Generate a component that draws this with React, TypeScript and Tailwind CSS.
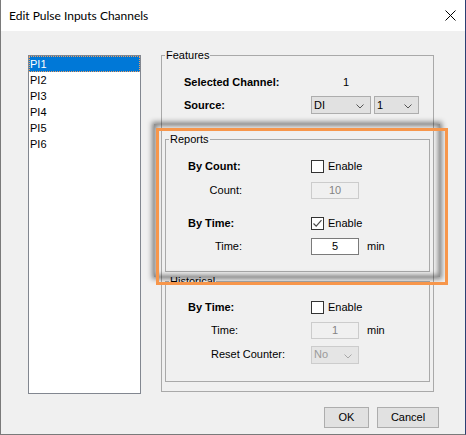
import React from "react";

function CheckBox({ checked }: { checked?: boolean }) {
  return (
    <span className="flex h-[13px] w-[13px] shrink-0 items-center justify-center border border-[#333333] bg-white">
      {checked && (
        <svg width="11" height="11" viewBox="0 0 11 11">
          <path d="M1.5 5.5 L4.2 8.2 L9.5 2.2" fill="none" stroke="#4a4a4a" strokeWidth="1.2" />
        </svg>
      )}
    </span>
  );
}

function Chevron({ color = "#555555" }: { color?: string }) {
  return (
    <svg width="8" height="5" viewBox="0 0 8 5" className="mt-[3px]">
      <path d="M0.5 0.5 L4 4 L7.5 0.5" fill="none" stroke={color} strokeWidth="1" />
    </svg>
  );
}

function Select({ value, width, disabled }: { value: string; width: string; disabled?: boolean }) {
  return (
    <div
      className={`flex h-[18px] items-center justify-between pl-[2px] pr-[6px] border ${width} ${
        disabled ? "border-[#cccccc] bg-[#e5e5e5] text-[#9a9a9a]" : "border-[#adadad] bg-[#e1e1e1] text-black"
      }`}
    >
      <span>{value}</span>
      <Chevron color={disabled ? "#a8a8a8" : "#555555"} />
    </div>
  );
}

function NumBox({ value, disabled }: { value: string; disabled?: boolean }) {
  return (
    <div
      className={`flex h-[17px] w-[48px] items-center justify-center border ${
        disabled ? "border-[#cccccc] bg-[#f0f0f0] text-[#838383]" : "border-[#7a7a7a] bg-white text-black"
      }`}
    >
      {value}
    </div>
  );
}

function Group({ title, children, className = "" }: { title: string; children: React.ReactNode; className?: string }) {
  return (
    <fieldset className={`border border-[#a9a9a9] ${className}`}>
      <legend className="ml-[3px] px-[1px] leading-[12px]">{title}</legend>
      {children}
    </fieldset>
  );
}

const CHANNELS = ["PI1", "PI2", "PI3", "PI4", "PI5", "PI6"];

export default function App() {
  return (
    <div className="relative flex h-[435px] w-[466px] flex-col overflow-hidden border-b border-l border-r border-b-[#7a7a7a] border-l-[#7a7a7a] border-r-[#2b3f73] bg-[#f0f0f0] font-['Liberation_Sans',Arial,sans-serif] text-[11px] text-black">
      <div className="flex h-[31px] shrink-0 items-center justify-between bg-white pl-[8px] pr-[9px]">
        <span className="font-['Lato','Noto_Sans',sans-serif] text-[12px] text-[#000000]">Edit Pulse Inputs Channels</span>
        <svg width="11" height="11" viewBox="0 0 11 11">
          <path d="M0.5 0.5 L10.5 10.5 M10.5 0.5 L0.5 10.5" stroke="#000" strokeWidth="1" />
        </svg>
      </div>

      <div className="flex flex-1 flex-col">
        <div className="flex items-start">
          <div className="ml-[27px] mt-[24px] h-[339px] w-[113px] border border-[#828790] bg-white">
            {CHANNELS.map((c, i) => (
              <div
                key={c}
                className={`flex h-[16px] items-center pl-[1px] ${
                  i === 0 ? "bg-[#0078d7] text-white outline outline-1 -outline-offset-1 outline-dotted outline-[#f0a060]" : ""
                }`}
              >
                {c}
              </div>
            ))}
          </div>

          <Group title="Features" className="ml-[20px] mt-[18px] w-[273px]">
            <div className="px-[3px] pb-[9px]">
              <div className="mt-[12px] flex h-[18px] items-center pl-[19px]">
                <span className="w-[127px] font-bold">Selected Channel:</span>
                <span className="pl-[32px]">1</span>
              </div>
              <div className="mt-[5px] flex h-[18px] items-center pl-[19px]">
                <span className="w-[127px] font-bold">Source:</span>
                <Select value="DI" width="w-[60px]" />
                <div className="ml-[3px]">
                  <Select value="1" width="w-[45px]" />
                </div>
              </div>

              <Group title="Reports" className="mt-[19px]">
                <div className="pb-[16px] pl-[22px]">
                  <div className="mt-[15px] flex h-[13px] items-center">
                    <span className="w-[123px] font-bold">By Count:</span>
                    <CheckBox />
                    <span className="ml-[4px]">Enable</span>
                  </div>
                  <div className="mt-[9px] flex h-[17px] items-center">
                    <div className="w-[123px]">
                      <div className="w-[54px] text-right">Count:</div>
                    </div>
                    <NumBox value="10" disabled />
                  </div>
                  <div className="mt-[18px] flex h-[13px] items-center">
                    <span className="w-[123px] font-bold">By Time:</span>
                    <CheckBox checked />
                    <span className="ml-[4px]">Enable</span>
                  </div>
                  <div className="mt-[8px] flex h-[17px] items-center">
                    <div className="w-[123px]">
                      <div className="w-[54px] text-right">Time:</div>
                    </div>
                    <NumBox value="5" />
                    <span className="ml-[8px]">min</span>
                  </div>
                </div>
              </Group>

              <Group title="Historical" className="mt-[3px]">
                <div className="pb-[18px] pl-[22px]">
                  <div className="mt-[14px] flex h-[13px] items-center">
                    <span className="w-[123px] font-bold">By Time:</span>
                    <CheckBox />
                    <span className="ml-[4px]">Enable</span>
                  </div>
                  <div className="mt-[8px] flex h-[17px] items-center">
                    <span className="w-[123px] pl-[23px]">Time:</span>
                    <NumBox value="1" disabled />
                    <span className="ml-[8px]">min</span>
                  </div>
                  <div className="mt-[7px] flex h-[17px] items-center">
                    <span className="w-[123px] pl-[23px]">Reset Counter:</span>
                    <Select value="No" width="w-[48px]" disabled />
                  </div>
                </div>
              </Group>
            </div>
          </Group>
        </div>

        <div className="mt-[13px] flex justify-end gap-[8px] pr-[26px]">
          <button className="h-[21px] w-[45px] border border-[#adadad] bg-[#e1e1e1]">OK</button>
          <button className="h-[21px] w-[62px] border border-[#adadad] bg-[#e1e1e1]">Cancel</button>
        </div>
      </div>

      {/* highlight drawn over the Reports group */}
      <div className="pointer-events-none absolute left-[153px] top-[124px] h-[153px] w-[286px] shadow-[0_0_5px_2px_rgba(0,0,0,0.45),inset_0_0_5px_2px_rgba(0,0,0,0.45)]" />
      <div className="pointer-events-none absolute left-[155px] top-[128px] h-[157px] w-[292px] border-[3px] border-[#f7964b]" />
    </div>
  );
}
